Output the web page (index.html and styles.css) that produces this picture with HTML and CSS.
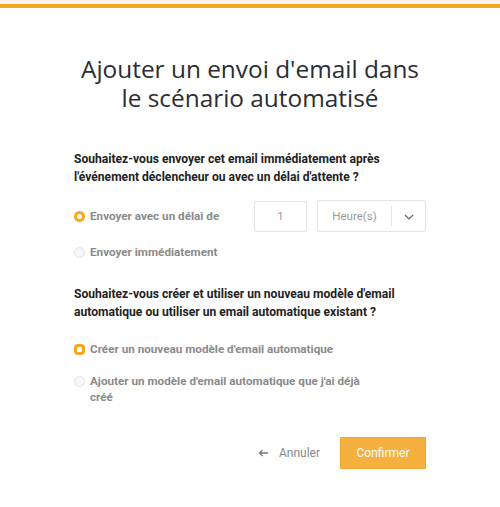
FILE: index.html
```html
<!DOCTYPE html>
<html lang="fr">
<head>
<meta charset="utf-8">
<link rel="stylesheet" href="styles.css">
</head>
<body>
<div class="topbar"></div>
<main class="modal">
  <h1 class="title"><span class="line">Ajouter un envoi d'email dans</span><span class="line">le scénario automatisé</span></h1>

  <p class="question">Souhaitez-vous envoyer cet email immédiatement après l'événement déclencheur ou avec un délai d'attente ?</p>

  <div class="option option-delay">
    <span class="radio radio-on"></span>
    <span class="label">Envoyer avec un délai de</span>
    <div class="num-input">1</div>
    <div class="select">
      <span class="select-value">Heure(s)</span>
      <span class="select-sep"></span>
      <svg class="chevron" width="10" height="6" viewBox="0 0 10 6"><path d="M1 1l4 4 4-4" fill="none" stroke="#666" stroke-width="1.2"/></svg>
    </div>
  </div>
  <div class="option option-now">
    <span class="radio"></span>
    <span class="label">Envoyer immédiatement</span>
  </div>

  <p class="question q2">Souhaitez-vous créer et utiliser un nouveau modèle d'email automatique ou utiliser un email automatique existant ?</p>

  <div class="option option-c">
    <span class="radio radio-sq"></span>
    <span class="label">Créer un nouveau modèle d'email automatique</span>
  </div>
  <div class="option option-top">
    <span class="radio"></span>
    <span class="label">Ajouter un modèle d'email automatique que j'ai déjà créé</span>
  </div>

  <div class="actions">
    <button class="cancel"><svg class="arrow" width="10" height="8" viewBox="0 0 10 8"><path d="M10 4H1.5M4.5 1L1.5 4l3 3" fill="none" stroke="#777" stroke-width="1.3"/></svg>Annuler</button>
    <button class="confirm">Confirmer</button>
  </div>
</main>
</body>
</html>
```

FILE: styles.css
```css
* { box-sizing: border-box; }
html, body { margin: 0; padding: 0; background: #fff; }
body { font-family: Roboto, "Liberation Sans", sans-serif; }

.topbar {
  height: 8px;
  border-top: 4px solid #fbf1e6;
  background: #f5a623;
}

.modal {
  width: 352px;
  margin: 0 auto;
  padding-top: 46px;
}

.title {
  margin: 0 -20px;
  text-align: center;
  font-family: "Open Sans", "Noto Sans", sans-serif;
  font-weight: 400;
  font-size: 24.4px;
  line-height: 29px;
  color: #2b2d33;
}
.title .line { display: block; }

.question {
  margin: 38px 0 0;
  font-size: 12.1px;
  font-weight: 700;
  line-height: 18px;
  color: #222;
}
.question.q2 { margin-top: 22px; }

.option {
  display: flex;
  align-items: center;
  gap: 5px;
  min-height: 22px;
}
.option-delay { margin-top: 14px; height: 32px; }
.option-now { margin-top: 9px; }
.option-c { margin-top: 17px; }
.option-top { align-items: flex-start; margin-top: 13px; }
.option-top .radio { margin-top: 3px; }

.radio {
  flex: none;
  width: 11px;
  height: 11px;
  border-radius: 50%;
  border: 1px solid #e3e3e3;
  background: #f7f7f7;
}
.radio-on { border: 3px solid #f5a623; background: #fff; }
.radio-sq { border: 3px solid #f5a623; background: #fff; border-radius: 4px; }

.label {
  font-size: 11.7px;
  font-weight: 700;
  line-height: 16px;
  color: #8a8a8a;
}
.option-top .label { max-width: 280px; }

.num-input {
  margin-left: auto;
  width: 53px;
  height: 31px;
  border: 1px solid #e4e4e4;
  border-radius: 2px;
  display: flex;
  align-items: center;
  justify-content: center;
  font-size: 11.5px;
  color: #999;
}
.select {
  margin-left: 5px;
  width: 109px;
  height: 32px;
  border: 1px solid #e4e4e4;
  border-radius: 2px;
  display: flex;
  align-items: center;
}
.select-value {
  flex: 1;
  text-align: center;
  font-size: 11.5px;
  color: #999;
}
.select-sep { width: 1px; height: 20px; background: #e4e4e4; }
.chevron { margin: 1px 11px 0 12px; }

.actions {
  display: flex;
  justify-content: flex-end;
  align-items: center;
  margin-top: 32px;
}
.cancel {
  border: 0;
  background: none;
  font-family: inherit;
  font-size: 12px;
  color: #888;
  padding: 0;
  margin-right: 20px;
  display: flex;
  align-items: center;
}
.arrow { margin-right: 11px; }
.confirm {
  width: 86px;
  height: 32px;
  border: 1px solid #efa52a;
  border-radius: 1px;
  background: #f4b13f;
  color: #fff;
  font-family: inherit;
  font-size: 12px;
  padding: 0;
}
```
